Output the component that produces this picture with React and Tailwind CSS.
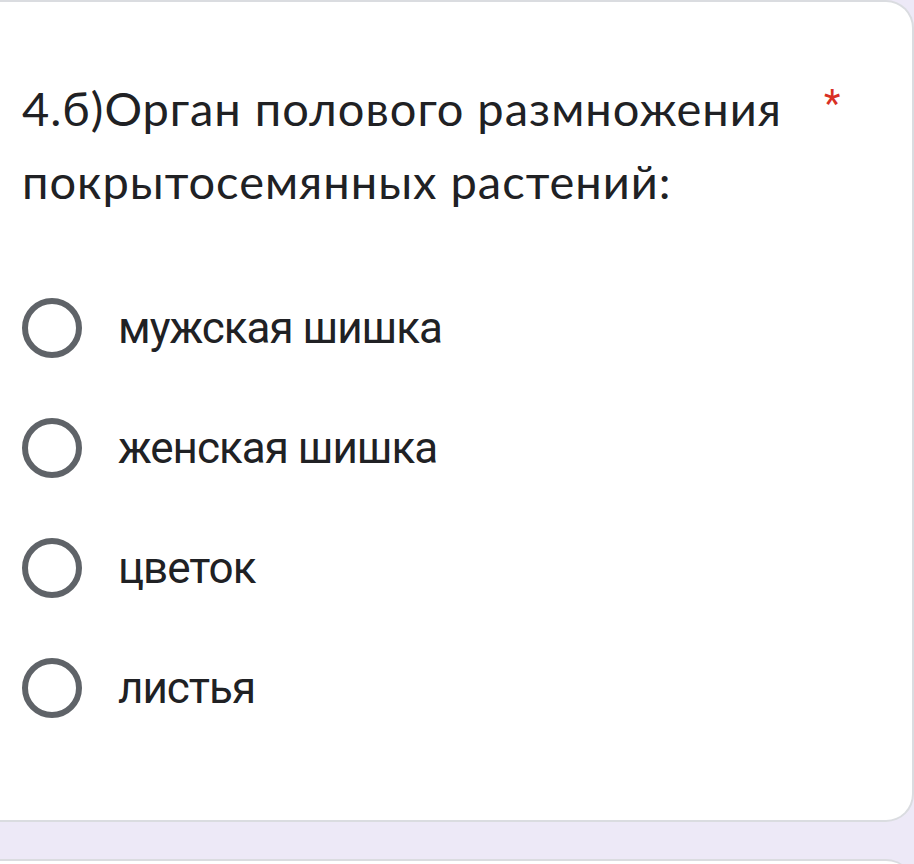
export default function App() {
  const options = ["мужская шишка", "женская шишка", "цветок", "листья"];
  return (
    <div className="w-[914px] h-[864px] bg-[#ede9f7] overflow-hidden">
      <div className="h-[822px] bg-white border-2 border-l-0 border-[#dadce0] rounded-tr-[28px] rounded-br-[28px] pl-[22px] pt-[70px]">
        <div className="flex items-start">
          <h1
            className="w-[790px] text-[47px] leading-[73px] text-[#202124] tracking-[1px]"
            style={{ fontFamily: '"Lato", "Open Sans", sans-serif' }}
          >
            4.б)Орган полового размножения покрытосемянных растений:
          </h1>
          <span
            className="ml-[12px] mt-[13px] text-[38px] leading-none text-[#d93025]"
            style={{ fontFamily: '"Roboto", sans-serif' }}
          >
            *
          </span>
        </div>
        <div className="mt-[50px] flex flex-col">
          {options.map((o) => (
            <div key={o} className="h-[120px] flex items-center">
              <div className="w-[60px] h-[60px] rounded-full border-[6px] border-[#5f6368] shrink-0" />
              <span
                className="ml-[36px] text-[44px] tracking-[-1px] text-[#202124]"
                style={{ fontFamily: '"Roboto", sans-serif' }}
              >
                {o}
              </span>
            </div>
          ))}
        </div>
      </div>
      <div className="mt-[37px] h-[40px] bg-white border-t-2 border-[#dadce0] rounded-tr-[28px]" />
    </div>
  );
}
